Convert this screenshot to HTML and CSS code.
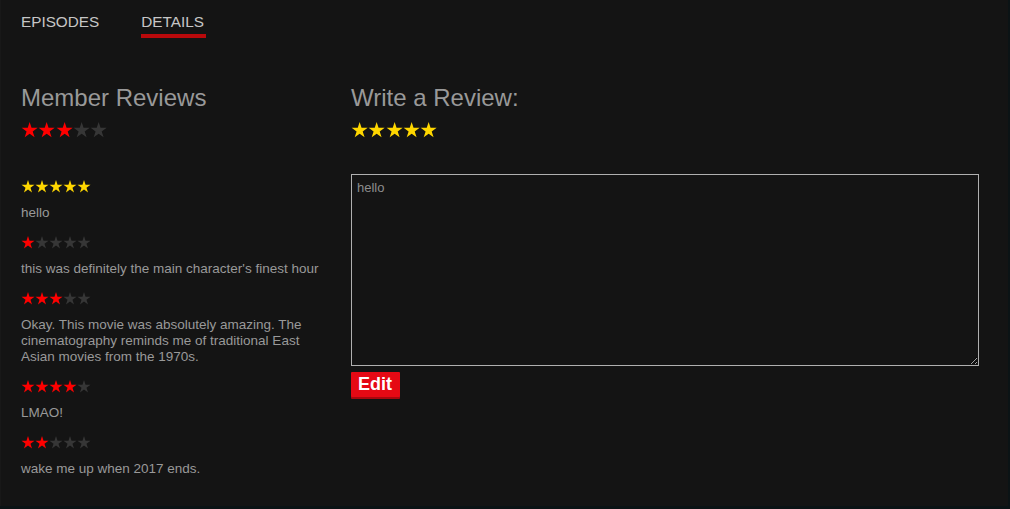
FILE: index.html
```html
<!DOCTYPE html>
<html>
<head>
<meta charset="utf-8">
<title>Details</title>
<link rel="stylesheet" href="styles.css">
</head>
<body>
<svg class="defs" width="0" height="0" aria-hidden="true">
  <symbol id="star" viewBox="0 0 100 95">
    <polygon points="50,0 61.23,34.55 97.55,34.55 68.16,55.9 79.39,90.45 50,69.1 20.61,90.45 31.84,55.9 2.45,34.55 38.77,34.55"/>
  </symbol>
</svg>
<div class="panel">
  <nav class="tabs">
    <span class="tab">EPISODES</span>
    <span class="tab active">DETAILS</span>
  </nav>
  <div class="content">
    <section class="col-left">
      <h2 class="heading">Member Reviews</h2>
      <div class="stars big">
        <svg class="red"><use href="#star"/></svg><svg class="red"><use href="#star"/></svg><svg class="red"><use href="#star"/></svg><svg class="off"><use href="#star"/></svg><svg class="off"><use href="#star"/></svg>
      </div>
      <div class="reviews">
        <div class="review">
          <div class="stars small">
            <svg class="gold"><use href="#star"/></svg><svg class="gold"><use href="#star"/></svg><svg class="gold"><use href="#star"/></svg><svg class="gold"><use href="#star"/></svg><svg class="gold"><use href="#star"/></svg>
          </div>
          <p class="text">hello</p>
        </div>
        <div class="review">
          <div class="stars small">
            <svg class="red"><use href="#star"/></svg><svg class="off"><use href="#star"/></svg><svg class="off"><use href="#star"/></svg><svg class="off"><use href="#star"/></svg><svg class="off"><use href="#star"/></svg>
          </div>
          <p class="text">this was definitely the main character's finest hour</p>
        </div>
        <div class="review">
          <div class="stars small">
            <svg class="red"><use href="#star"/></svg><svg class="red"><use href="#star"/></svg><svg class="red"><use href="#star"/></svg><svg class="off"><use href="#star"/></svg><svg class="off"><use href="#star"/></svg>
          </div>
          <p class="text">Okay. This movie was absolutely amazing. The cinematography reminds me of traditional East Asian movies from the 1970s.</p>
        </div>
        <div class="review">
          <div class="stars small">
            <svg class="red"><use href="#star"/></svg><svg class="red"><use href="#star"/></svg><svg class="red"><use href="#star"/></svg><svg class="red"><use href="#star"/></svg><svg class="off"><use href="#star"/></svg>
          </div>
          <p class="text">LMAO!</p>
        </div>
        <div class="review">
          <div class="stars small">
            <svg class="red"><use href="#star"/></svg><svg class="red"><use href="#star"/></svg><svg class="off"><use href="#star"/></svg><svg class="off"><use href="#star"/></svg><svg class="off"><use href="#star"/></svg>
          </div>
          <p class="text">wake me up when 2017 ends.</p>
        </div>
      </div>
    </section>
    <section class="col-right">
      <h2 class="heading">Write a Review:</h2>
      <div class="stars big">
        <svg class="gold"><use href="#star"/></svg><svg class="gold"><use href="#star"/></svg><svg class="gold"><use href="#star"/></svg><svg class="gold"><use href="#star"/></svg><svg class="gold"><use href="#star"/></svg>
      </div>
      <textarea class="review-input">hello</textarea>
      <button class="edit-btn">Edit</button>
    </section>
  </div>
</div>
</body>
</html>
```

FILE: styles.css
```css
html, body {
  margin: 0;
  padding: 0;
}
body {
  background: #0b1315;
  font-family: "Liberation Sans", Arial, sans-serif;
  width: 1010px;
  height: 509px;
  overflow: hidden;
}
.defs {
  position: absolute;
  width: 0;
  height: 0;
}
.panel {
  width: 1008px;
  height: 506px;
  background: #141414;
  box-sizing: border-box;
  border-left: 1px solid #181818;
}
.tabs {
  display: flex;
  gap: 42px;
  padding: 13px 0 0 20px;
}
.tab {
  font-size: 15.3px;
  line-height: 18px;
  color: #c6c6c6;
  padding: 0 0 3px 0;
  border-bottom: 4px solid transparent;
}
.tab.active {
  padding-right: 2px;
  border-bottom-color: #b9090b;
}
.content {
  display: flex;
  gap: 20px;
  padding: 46px 0 0 20px;
}
.col-left {
  width: 310px;
}
.col-right {
  width: 628px;
}
.heading {
  margin: 0;
  font-weight: normal;
  font-size: 24px;
  line-height: 28px;
  color: #999;
}
.stars {
  display: flex;
}
.stars svg {
  display: block;
  flex: none;
}
.stars.big {
  margin-top: 10px;
  height: 16px;
}
.stars.big svg {
  width: 17.3px;
  height: 16px;
}
.stars.small {
  height: 14px;
}
.stars.small svg {
  width: 14px;
  height: 13px;
}
.red { fill: #ff0000; }
.off { fill: #363636; }
.gold { fill: #ffd700; }
.reviews {
  margin-top: 42px;
}
.text {
  margin: 11px 0 15px;
  font-size: 13.5px;
  line-height: 16px;
  color: #999;
}
.review-input {
  display: block;
  margin-top: 36px;
  width: 628px;
  height: 192px;
  box-sizing: border-box;
  background: #141414;
  border: 1px solid #b0b0b0;
  padding: 5px 5px;
  font-family: "Liberation Sans", Arial, sans-serif;
  font-size: 13px;
  line-height: 15px;
  color: #8c8c8c;
  resize: both;
  outline: none;
}
.edit-btn {
  display: block;
  margin-top: 6px;
  height: 25px;
  padding: 0 8px 0 7px;
  border: none;
  border-radius: 1px;
  background: #e50914;
  box-shadow: 0 2px 0 #a9070e;
  color: #fff;
  font-family: "Liberation Sans", Arial, sans-serif;
  font-weight: bold;
  font-size: 18px;
  line-height: 25px;
}
```
